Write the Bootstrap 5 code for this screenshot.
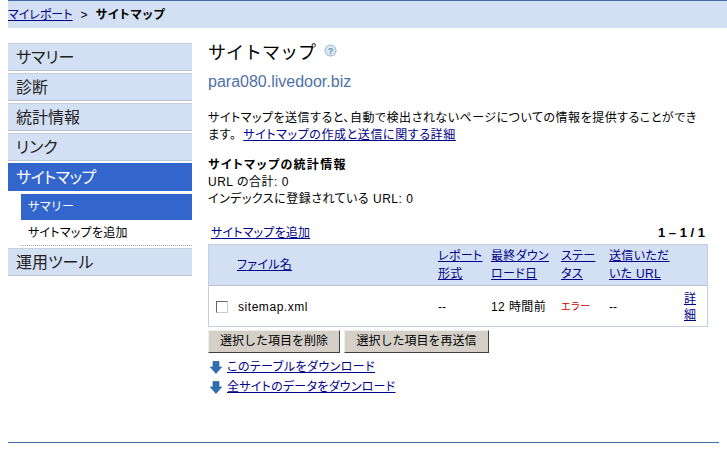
<!DOCTYPE html>
<html lang="ja">
<head>
<meta charset="utf-8">
<title>サイトマップ</title>
<link href="https://cdn.jsdelivr.net/npm/bootstrap@5.3.0/dist/css/bootstrap.min.css" rel="stylesheet">
<style>
html,body{height:450px;overflow:hidden}
body{font-family:"Liberation Sans","Noto Sans CJK JP",sans-serif;font-size:12px;line-height:16px;color:#000;background:#fff;padding-left:8px;font-feature-settings:"palt"}
a{color:#00008b;text-decoration:underline}
.crumb{height:28px;background:#d3dff3;border-top:1px solid #3f6ba8;padding:6px 0 0 0;margin-bottom:15px}
.crumb .sep{margin:0 8px}
.crumb b{letter-spacing:.9px}
.layout{gap:16px}
.sidenav{width:184px;flex:none}
.navitem{height:28px;margin-bottom:2px;padding:3px 0 0 8px;background:#d3dff3;border-bottom:1px solid #b9c3d3;border-top:1px solid #c5cfe0;font-size:16px;line-height:21px;color:#222}
.navitem.on{background:#3366cc;color:#fff;border-color:#3366cc;margin-bottom:3px;letter-spacing:-.6px}
.subitem{margin-left:13px;height:26px;padding:5px 0 0 7px;font-size:12px;line-height:17px;letter-spacing:.25px}
.subitem.on{background:#3366cc;color:#fff;letter-spacing:.7px}
.subitem.add{border-bottom:1px dotted #aaa;margin-bottom:2px}
.mainpane{width:500px;flex:none}
.pagetitle{font-size:18px;line-height:24px;font-weight:400;margin:-2px 0 7px;display:flex;align-items:flex-start;gap:8px;font-feature-settings:normal}
.pagetitle svg{margin-top:3px}
.domain{font-size:16px;line-height:20px;color:#4f72a8;margin-bottom:18px}
.intro{line-height:17px;margin-bottom:13px;width:498px;letter-spacing:.52px}
.intro a{letter-spacing:.6px;margin-left:7px}
.stats{line-height:17px;margin-bottom:11px;letter-spacing:.5px}
.stats strong{font-weight:700;letter-spacing:1.3px}
.tabletop{height:25px;padding:6px 3px 0 3px}
.tabletop a{letter-spacing:.2px}
.tabletop b{font-size:13px}
.smtable{border:1px solid #c5cfdf;width:500px;height:83px}
.smhead{background:#d3dff3;height:41px;border-bottom:1px solid #b8c2d4;line-height:18px}
.smhead a{letter-spacing:.3px}
.smrow{height:41px}
.smhead>div,.smrow>div{flex:none}
.c1{width:229px}
.c2{width:53px}
.c3{width:70px}
.c4{width:48px}
.c5{width:75px}
.c6{width:23px}
.smhead .c1{padding-left:28px}
.smrow .c1{padding-left:7px;gap:10px;letter-spacing:.55px}
.smrow .c3{letter-spacing:.4px}
.boxmark{width:12px;height:12px;border:1px solid #666;border-right-color:#ccc;border-bottom-color:#ccc;background:#fff;display:block}
.err{color:#c00;font-size:10px;letter-spacing:.5px}
.actions{gap:4px;margin:3px 0 4px}
.grey{background:#d4d0c8;border:1px solid;border-color:#eee #404040 #404040 #eee;padding:0 4px;height:23px;font-size:12px;line-height:19px;color:#000;border-radius:0;width:132px}
.grey.wide{width:145px}
.dl{height:20px;gap:5px;padding-left:2px;line-height:18px;letter-spacing:.45px}
.dl+.dl{letter-spacing:.25px}
.endrule{border-top:1px solid #3f6ba8;margin-top:45px;width:711px}
</style>
</head>
<body>
<div class="crumb"><a href="#">マイレポート</a><span class="sep">&gt;</span><b>サイトマップ</b></div>
<div class="d-flex layout">
  <nav class="sidenav">
    <div class="navitem">サマリー</div>
    <div class="navitem">診断</div>
    <div class="navitem">統計情報</div>
    <div class="navitem">リンク</div>
    <div class="navitem on">サイトマップ</div>
    <div class="subitem on">サマリー</div>
    <div class="subitem add">サイトマップを追加</div>
    <div class="navitem">運用ツール</div>
  </nav>
  <main class="mainpane">
    <h1 class="pagetitle">サイトマップ
      <svg width="13" height="13" viewBox="0 0 13 13"><circle cx="6.5" cy="6.5" r="5.500" fill="#dbe8f2" stroke="#8fb4cc"/><text x="6.5" y="10" text-anchor="middle" font-size="9" font-weight="700" font-family="Liberation Sans" fill="#5b93b8">?</text></svg>
    </h1>
    <div class="domain">para080.livedoor.biz</div>
    <p class="intro">サイトマップを送信すると、自動で検出されないページについての情報を提供することができ<br>ます。<a href="#">サイトマップの作成と送信に関する詳細</a></p>
    <div class="stats"><strong>サイトマップの統計情報</strong><br>URL の合計: 0<br>インデックスに登録されている URL: 0</div>
    <div class="d-flex justify-content-between tabletop"><a href="#">サイトマップを追加</a><b>1 – 1 / 1</b></div>
    <div class="smtable">
      <div class="d-flex align-items-center smhead">
        <div class="c1"><a href="#">ファイル名</a></div>
        <div class="c2"><a href="#">レポート<br>形式</a></div>
        <div class="c3"><a href="#">最終ダウン<br>ロード日</a></div>
        <div class="c4"><a href="#">ステー<br>タス</a></div>
        <div class="c5"><a href="#">送信いただ<br>いた URL</a></div>
        <div class="c6"></div>
      </div>
      <div class="d-flex align-items-center smrow">
        <div class="c1 d-flex align-items-center"><span class="boxmark"></span><span>sitemap.xml</span></div>
        <div class="c2">--</div>
        <div class="c3">12 時間前</div>
        <div class="c4 err">エラー</div>
        <div class="c5">--</div>
        <div class="c6"><a href="#">詳<br>細</a></div>
      </div>
    </div>
    <div class="d-flex actions">
      <button type="button" class="btn grey">選択した項目を削除</button>
      <button type="button" class="btn grey wide">選択した項目を再送信</button>
    </div>
    <div class="d-flex align-items-center dl">
      <svg width="12" height="13" viewBox="0 0 12 13"><path d="M3 .5h6v5.500h2.700l-5.700 6.500-5.700-6.500h2.700z" fill="#2f6fb5" stroke="#234f8a" stroke-width=".6"/></svg>
      <a href="#">このテーブルをダウンロード</a>
    </div>
    <div class="d-flex align-items-center dl">
      <svg width="12" height="13" viewBox="0 0 12 13"><path d="M3 .5h6v5.500h2.700l-5.700 6.500-5.700-6.500h2.700z" fill="#2f6fb5" stroke="#234f8a" stroke-width=".6"/></svg>
      <a href="#">全サイトのデータをダウンロード</a>
    </div>
  </main>
</div>
<div class="endrule"></div>
<script src="https://cdn.jsdelivr.net/npm/bootstrap@5.3.0/dist/js/bootstrap.bundle.min.js"></script>
</body>
</html>
